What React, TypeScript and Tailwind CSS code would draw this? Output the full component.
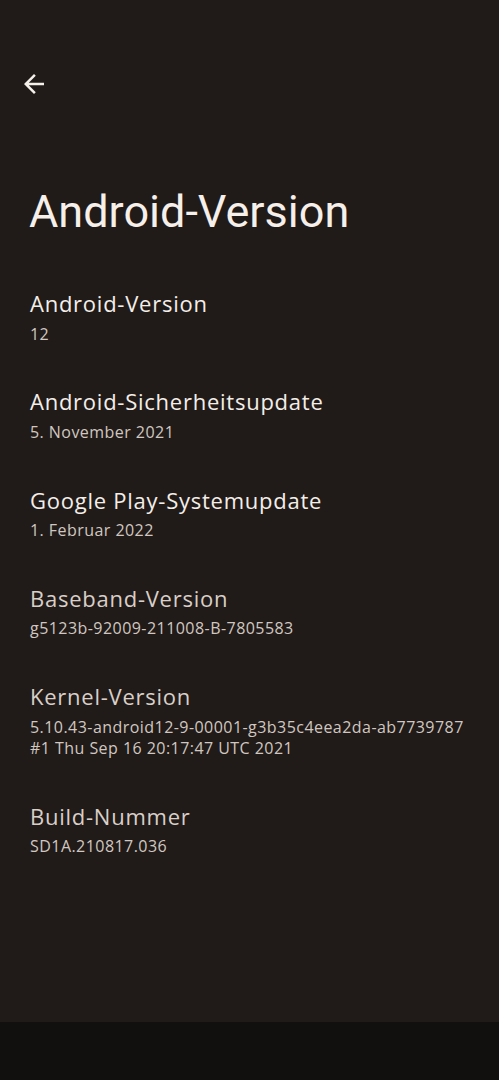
import React from "react";

const items: { title: string; sub: string[]; dim?: boolean }[] = [
  { title: "Android-Version", sub: ["12"] },
  { title: "Android-Sicherheitsupdate", sub: ["5. November 2021"] },
  { title: "Google Play-Systemupdate", sub: ["1. Februar 2022"] },
  { title: "Baseband-Version", sub: ["g5123b-92009-211008-B-7805583"], dim: true },
  {
    title: "Kernel-Version",
    sub: ["5.10.43-android12-9-00001-g3b35c4eea2da-ab7739787", "#1 Thu Sep 16 20:17:47 UTC 2021"],
    dim: true,
  },
  { title: "Build-Nummer", sub: ["SD1A.210817.036"], dim: true },
];

export default function App() {
  return (
    <div
      className="w-[499px] h-[1080px] flex flex-col bg-[#201b18] overflow-hidden"
      style={{ fontFamily: "'Open Sans', Roboto, sans-serif" }}
    >
      <div className="flex-1 flex flex-col">
        <div className="pt-[69px] pl-[19px]">
          <svg width="30" height="30" viewBox="0 0 24 24" fill="#f6f0eb">
            <path d="M20 11H7.83l5.59-5.59L12 4l-8 8 8 8 1.41-1.41L7.83 13H20v-2z" />
          </svg>
        </div>
        <h1
          className="mt-[85px] pl-[29px] text-[45px] leading-[56px] text-[#f6efea] font-normal"
          style={{ fontFamily: "Roboto, sans-serif" }}
        >
          Android-Version
        </h1>
        <div className="mt-[49px] pl-[30px] flex flex-col gap-[42.5px]">
          {items.map((it) => (
            <div key={it.title} className="flex flex-col">
              <div
                className={
                  "text-[22px] leading-[28px] tracking-[0.75px] " +
                  (it.dim ? "text-[#d9cfc8]" : "text-[#f4eee9]")
                }
              >
                {it.title}
              </div>
              <div className="mt-[6.5px] flex flex-col text-[16px] leading-[21.3px] tracking-[0.45px] text-[#d1c7c0]">
                {it.sub.map((s) => (
                  <span key={s}>{s}</span>
                ))}
              </div>
            </div>
          ))}
        </div>
      </div>
      <div className="h-[58px] bg-[#11100e]" />
    </div>
  );
}
